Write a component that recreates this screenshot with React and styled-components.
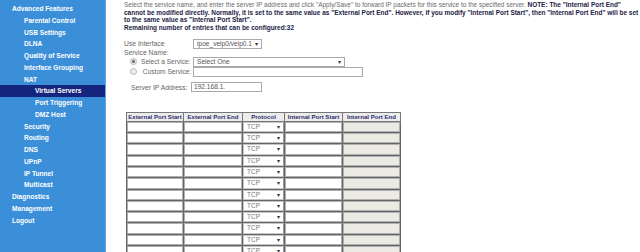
import styled, { createGlobalStyle } from "styled-components";

const GlobalStyle = createGlobalStyle`
  html, body {
    margin: 0;
    padding: 0;
    background: #fff;
    font-family: "Liberation Sans", Arial, sans-serif;
  }
`;

const menu = [
  { label: "Advanced Features", level: 0 },
  { label: "Parental Control", level: 1 },
  { label: "USB Settings", level: 1 },
  { label: "DLNA", level: 1 },
  { label: "Quality of Service", level: 1 },
  { label: "Interface Grouping", level: 1 },
  { label: "NAT", level: 1 },
  { label: "Virtual Servers", level: 2, active: true },
  { label: "Port Triggering", level: 2 },
  { label: "DMZ Host", level: 2 },
  { label: "Security", level: 1 },
  { label: "Routing", level: 1 },
  { label: "DNS", level: 1 },
  { label: "UPnP", level: 1 },
  { label: "IP Tunnel", level: 1 },
  { label: "Multicast", level: 1 },
  { label: "Diagnostics", level: 0 },
  { label: "Management", level: 0 },
  { label: "Logout", level: 0 },
];

const indents = [12, 24, 35];

function App() {
  const rows = Array.from({ length: 12 });

  return (
    <Page>
      <GlobalStyle />
      <Sidebar>
        {menu.map((m) => (
          <MenuItem key={m.label} indent={indents[m.level]} active={m.active}>
            {m.label}
          </MenuItem>
        ))}
      </Sidebar>
      <Main>
        <Intro>
          Select the service name, and enter the server IP address and click "Apply/Save" to forward IP packets for this service to the specified server. <b>NOTE: The "Internal Port End"</b>
          <br />
          <b>cannot be modified directly. Normally, it is set to the same value as "External Port End". However, if you modify "Internal Port Start", then "Internal Port End" will be set</b>
          <br />
          <b>to the same value as "Internal Port Start".</b>
          <br />
          <b>Remaining number of entries that can be configured:32</b>
        </Intro>

        <Form>
          <FormRow>
            <Label>Use Interface</Label>
            <Select width={69}>ipoe_veip0/veip0.1<Arrow>▾</Arrow></Select>
          </FormRow>
          <FormRow short>
            <Label>Service Name:</Label>
          </FormRow>
          <FormRow>
            <RadioLabel>
              <Radio checked />
              Select a Service:
            </RadioLabel>
            <Select width={152}>Select One<Arrow>▾</Arrow></Select>
          </FormRow>
          <FormRow>
            <RadioLabel>
              <Radio />
              &nbsp;Custom Service:
            </RadioLabel>
            <TextBox width={170} />
          </FormRow>
          <IpRow>
            <IpLabel>Server IP Address:</IpLabel>
            <TextBox width={71}>192.168.1.</TextBox>
          </IpRow>
        </Form>

        <Table>
          <thead>
            <tr>
              <Th w={56}>External Port Start</Th>
              <Th w={58}>External Port End</Th>
              <Th w={41}>Protocol</Th>
              <Th w={57}>Internal Port Start</Th>
              <Th w={57}>Internal Port End</Th>
            </tr>
          </thead>
          <tbody>
            {rows.map((_, i) => (
              <tr key={i}>
                <Td><CellInput /></Td>
                <Td><CellInput /></Td>
                <Td><CellSelect>TCP<Arrow>▾</Arrow></CellSelect></Td>
                <Td><CellInput /></Td>
                <Td><CellInput disabled /></Td>
              </tr>
            ))}
          </tbody>
        </Table>
      </Main>
    </Page>
  );
}

const Page = styled.div`
  display: flex;
  width: 640px;
  height: 252px;
  overflow: hidden;
`;

const Sidebar = styled.div`
  width: 106px;
  flex-shrink: 0;
  background: #3a8fd8;
  border-right: 1px solid #5aa6e6;
  padding-top: 3px;
  box-sizing: border-box;
`;

const MenuItem = styled.div`
  height: 11.78px;
  line-height: 11.78px;
  padding-left: ${({ indent }) => indent}px;
  font-size: 6.6px;
  font-weight: bold;
  color: #fff;
  white-space: nowrap;
  background: ${({ active }) => (active ? "#15247c" : "transparent")};
`;

const Main = styled.div`
  flex: 1;
  padding: 1px 0 0 18px;
  color: #666;
  font-size: 7px;
`;

const Intro = styled.div`
  font-size: 6.47px;
  line-height: 7.7px;
  white-space: nowrap;
  color: #6a6a6a;

  b {
    color: #222244;
  }
`;

const Form = styled.div`
  margin-top: 7px;
  display: flex;
  flex-direction: column;
`;

const FormRow = styled.div`
  display: flex;
  align-items: center;
  height: ${({ short }) => (short ? "8px" : "10px")};
`;

const Label = styled.div`
  width: 69px;
  font-size: 6.8px;
  color: #666;
  white-space: nowrap;
`;

const RadioLabel = styled.div`
  width: 69px;
  display: flex;
  align-items: center;
  gap: 4px;
  padding-left: 6px;
  box-sizing: border-box;
  font-size: 6.6px;
  color: #666;
  white-space: nowrap;
  overflow: hidden;
`;

const Radio = styled.span`
  width: 5px;
  height: 5px;
  border-radius: 50%;
  border: 1px solid #b5b5b5;
  background: ${({ checked }) =>
    checked ? "radial-gradient(circle, #666 0 1.2px, #eee 1.6px)" : "#eee"};
  flex-shrink: 0;
`;

const Select = styled.div`
  position: relative;
  width: ${({ width }) => width}px;
  height: 10px;
  box-sizing: border-box;
  border: 1px solid #a9a9a9;
  background: #fff;
  font-size: 6.6px;
  line-height: 8px;
  padding-left: 3px;
  color: #555;
  white-space: nowrap;
`;

const Arrow = styled.span`
  position: absolute;
  right: 3px;
  top: 0;
  font-size: 6px;
  color: #333;
`;

const TextBox = styled.div`
  width: ${({ width }) => width}px;
  height: 10px;
  box-sizing: border-box;
  border: 1px solid #a9a9a9;
  background: #fff;
  font-size: 6.6px;
  line-height: 8px;
  padding-left: 2px;
  color: #555;
`;

const IpRow = styled.div`
  display: flex;
  align-items: center;
  margin-top: 5px;
  height: 11px;
  padding-left: 7px;
`;

const IpLabel = styled.div`
  width: 60px;
  font-size: 6.8px;
  color: #666;
  white-space: nowrap;
`;

const Table = styled.table`
  margin-top: 19px;
  margin-left: 2px;
  border-collapse: collapse;
  table-layout: fixed;
  border: 1px solid #555;
`;

const Th = styled.th`
  width: ${({ w }) => w}px;
  height: 8px;
  padding: 0;
  border: 1px solid #777;
  background: #ececec;
  color: #2c2c6c;
  font-size: 6.1px;
  font-weight: bold;
  line-height: 7px;
  white-space: nowrap;
  overflow: hidden;
`;

const Td = styled.td`
  height: 10.3px;
  padding: 0;
  border: 1px solid #666;
`;

const CellInput = styled.div`
  height: 10.3px;
  box-sizing: border-box;
  border: 1px solid #b0b0b0;
  background: ${({ disabled }) => (disabled ? "#ebebe4" : "#fff")};
`;

const CellSelect = styled.div`
  position: relative;
  height: 10.3px;
  box-sizing: border-box;
  border: 1px solid #c6c6c6;
  border-right-color: #999;
  background: #fff;
  font-size: 6.5px;
  line-height: 8.3px;
  padding-left: 3px;
  color: #777;
`;

export default App;
